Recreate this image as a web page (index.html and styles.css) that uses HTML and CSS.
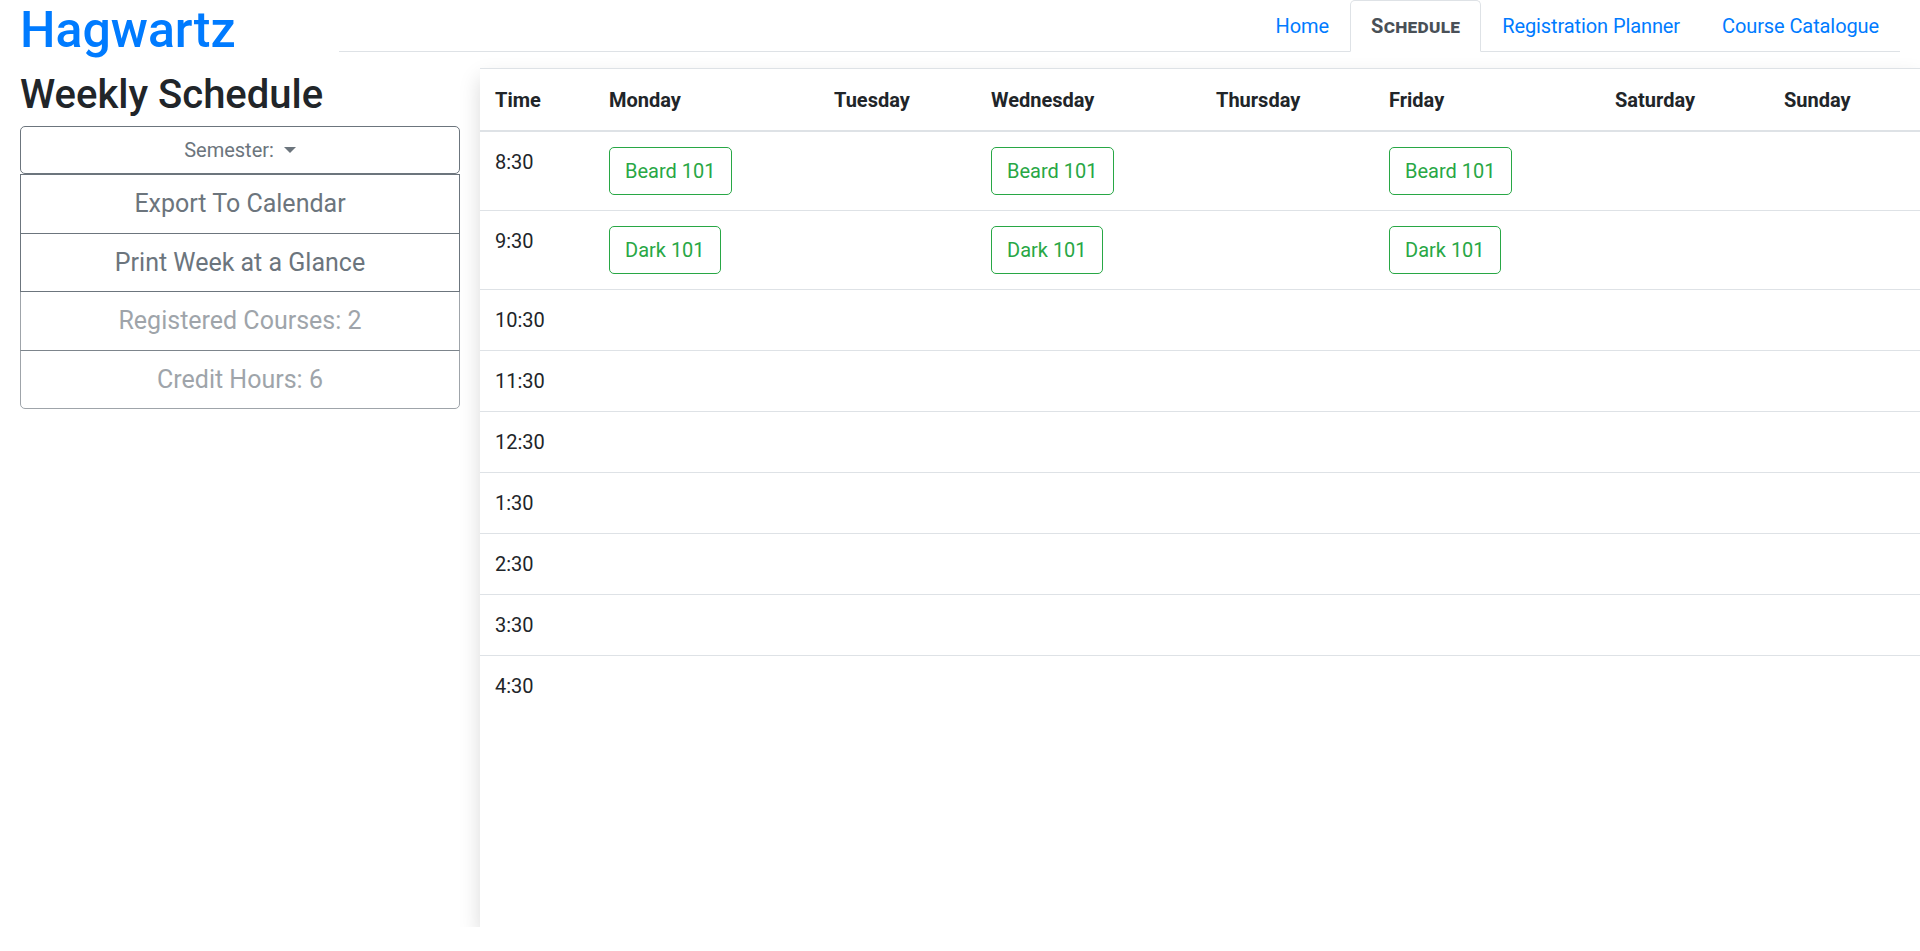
FILE: index.html
```html
<!DOCTYPE html>
<html lang="en">
<head>
<meta charset="utf-8">
<title>Hagwartz - Weekly Schedule</title>
<link rel="stylesheet" href="styles.css">
</head>
<body>
<header class="topbar">
  <h1 class="brand">Hagwartz</h1>
  <nav class="tabs-wrap">
    <ul class="tabs">
      <li><a class="tab" href="#">Home</a></li>
      <li><a class="tab active" href="#">Schedule</a></li>
      <li><a class="tab" href="#">Registration Planner</a></li>
      <li><a class="tab" href="#">Course Catalogue</a></li>
    </ul>
  </nav>
</header>
<main class="page">
  <aside class="sidebar">
    <h2 class="page-title">Weekly Schedule</h2>
    <button class="btn btn-dropdown" type="button">Semester: <span class="caret"></span></button>
    <div class="btn-stack">
      <button class="btn btn-lg" type="button">Export To Calendar</button>
      <button class="btn btn-lg" type="button">Print Week at a Glance</button>
      <button class="btn btn-lg disabled" type="button">Registered Courses: 2</button>
      <button class="btn btn-lg disabled last" type="button">Credit Hours: 6</button>
    </div>
  </aside>
  <section class="card">
    <table class="schedule">
      <colgroup>
        <col class="c-time"><col class="c-mon"><col class="c-tue"><col class="c-wed"><col class="c-thu"><col class="c-fri"><col class="c-sat"><col class="c-sun">
      </colgroup>
      <thead>
        <tr><th>Time</th><th>Monday</th><th>Tuesday</th><th>Wednesday</th><th>Thursday</th><th>Friday</th><th>Saturday</th><th>Sunday</th></tr>
      </thead>
      <tbody>
        <tr><td>8:30</td><td><button class="course">Beard 101</button></td><td></td><td><button class="course">Beard 101</button></td><td></td><td><button class="course">Beard 101</button></td><td></td><td></td></tr>
        <tr><td>9:30</td><td><button class="course">Dark 101</button></td><td></td><td><button class="course">Dark 101</button></td><td></td><td><button class="course">Dark 101</button></td><td></td><td></td></tr>
        <tr><td>10:30</td><td></td><td></td><td></td><td></td><td></td><td></td><td></td></tr>
        <tr><td>11:30</td><td></td><td></td><td></td><td></td><td></td><td></td><td></td></tr>
        <tr><td>12:30</td><td></td><td></td><td></td><td></td><td></td><td></td><td></td></tr>
        <tr><td>1:30</td><td></td><td></td><td></td><td></td><td></td><td></td><td></td></tr>
        <tr><td>2:30</td><td></td><td></td><td></td><td></td><td></td><td></td><td></td></tr>
        <tr><td>3:30</td><td></td><td></td><td></td><td></td><td></td><td></td><td></td></tr>
        <tr><td>4:30</td><td></td><td></td><td></td><td></td><td></td><td></td><td></td></tr>
      </tbody>
    </table>
  </section>
</main>
</body>
</html>
```

FILE: styles.css
```css
* { box-sizing: border-box; }

html, body {
  margin: 0;
  padding: 0;
  background: #fff;
}

body {
  font-family: Roboto, "Noto Sans", "Liberation Sans", sans-serif;
  font-size: 20px;
  line-height: 1.5;
  color: #212529;
}

.topbar {
  display: flex;
  align-items: flex-start;
  padding: 0 20px;
  height: 60px;
}

.brand {
  flex: none;
  width: 319px;
  margin: 0;
  font-size: 50px;
  font-weight: 500;
  line-height: 1.2;
  color: #007bff;
}

.tabs-wrap {
  flex: 1;
}

.tabs {
  list-style: none;
  margin: 0;
  padding: 0;
  display: flex;
  justify-content: flex-end;
  border-bottom: 1px solid #dee2e6;
}

.tabs li {
  margin-bottom: -1px;
}

.tab {
  display: block;
  padding: 10px 20px;
  border: 1px solid transparent;
  border-top-left-radius: 5px;
  border-top-right-radius: 5px;
  color: #007bff;
  text-decoration: none;
  line-height: 30px;
  letter-spacing: -0.1px;
}

.tab.active {
  color: #495057;
  background: #fff;
  border-color: #dee2e6 #dee2e6 #fff;
  font-weight: 700;
  font-variant: small-caps;
  letter-spacing: 0.3px;
}

.page {
  display: flex;
  align-items: flex-start;
  gap: 20px;
  padding-left: 20px;
  margin-top: 8px;
}

.sidebar {
  flex: none;
  width: 440px;
  padding-top: 3px;
  display: flex;
  flex-direction: column;
}

.page-title {
  margin: 0 0 7px;
  font-size: 40px;
  font-weight: 500;
  line-height: 1.2;
  color: #212529;
}

.btn {
  display: block;
  width: 100%;
  font-family: inherit;
  font-size: 20px;
  line-height: 30px;
  padding: 8px 15px;
  color: #6c757d;
  background: #fff;
  border: 1px solid #6c757d;
  border-radius: 5px;
  text-align: center;
  cursor: pointer;
}

.caret {
  display: inline-block;
  margin-left: 5px;
  vertical-align: 4px;
  border-top: 6px solid #6c757d;
  border-left: 6px solid transparent;
  border-right: 6px solid transparent;
}

.btn-stack {
  display: flex;
  flex-direction: column;
}

.btn-lg {
  font-size: 25px;
  line-height: 37.5px;
  padding: 10px 20px;
  border-radius: 0;
  margin-top: -1px;
}

.btn-stack .btn-lg:first-child {
  margin-top: 0;
}

.btn-lg.disabled {
  opacity: .65;
  cursor: default;
}

.btn-lg.last {
  border-bottom-left-radius: 5px;
  border-bottom-right-radius: 5px;
}

.card {
  flex: none;
  width: 1440px;
  height: 859px;
  background: #fff;
  box-shadow: 0 10px 20px rgba(0, 0, 0, .15);
}

.schedule {
  width: 100%;
  border-collapse: collapse;
  table-layout: fixed;
}

.c-time { width: 114px; }
.c-mon { width: 225px; }
.c-tue { width: 157px; }
.c-wed { width: 225px; }
.c-thu { width: 173px; }
.c-fri { width: 226px; }
.c-sat { width: 169px; }
.c-sun { width: 151px; }

.schedule th,
.schedule td {
  padding: 15px;
  text-align: left;
  vertical-align: top;
  border-top: 1px solid #dee2e6;
}

.schedule th {
  font-weight: 700;
  padding-top: 16px;
  border-bottom: 2px solid #dee2e6;
}

.course {
  font-family: inherit;
  font-size: 20px;
  line-height: 30px;
  padding: 8px 15px;
  color: #28a745;
  background: transparent;
  border: 1px solid #28a745;
  border-radius: 5px;
  cursor: pointer;
}
```
